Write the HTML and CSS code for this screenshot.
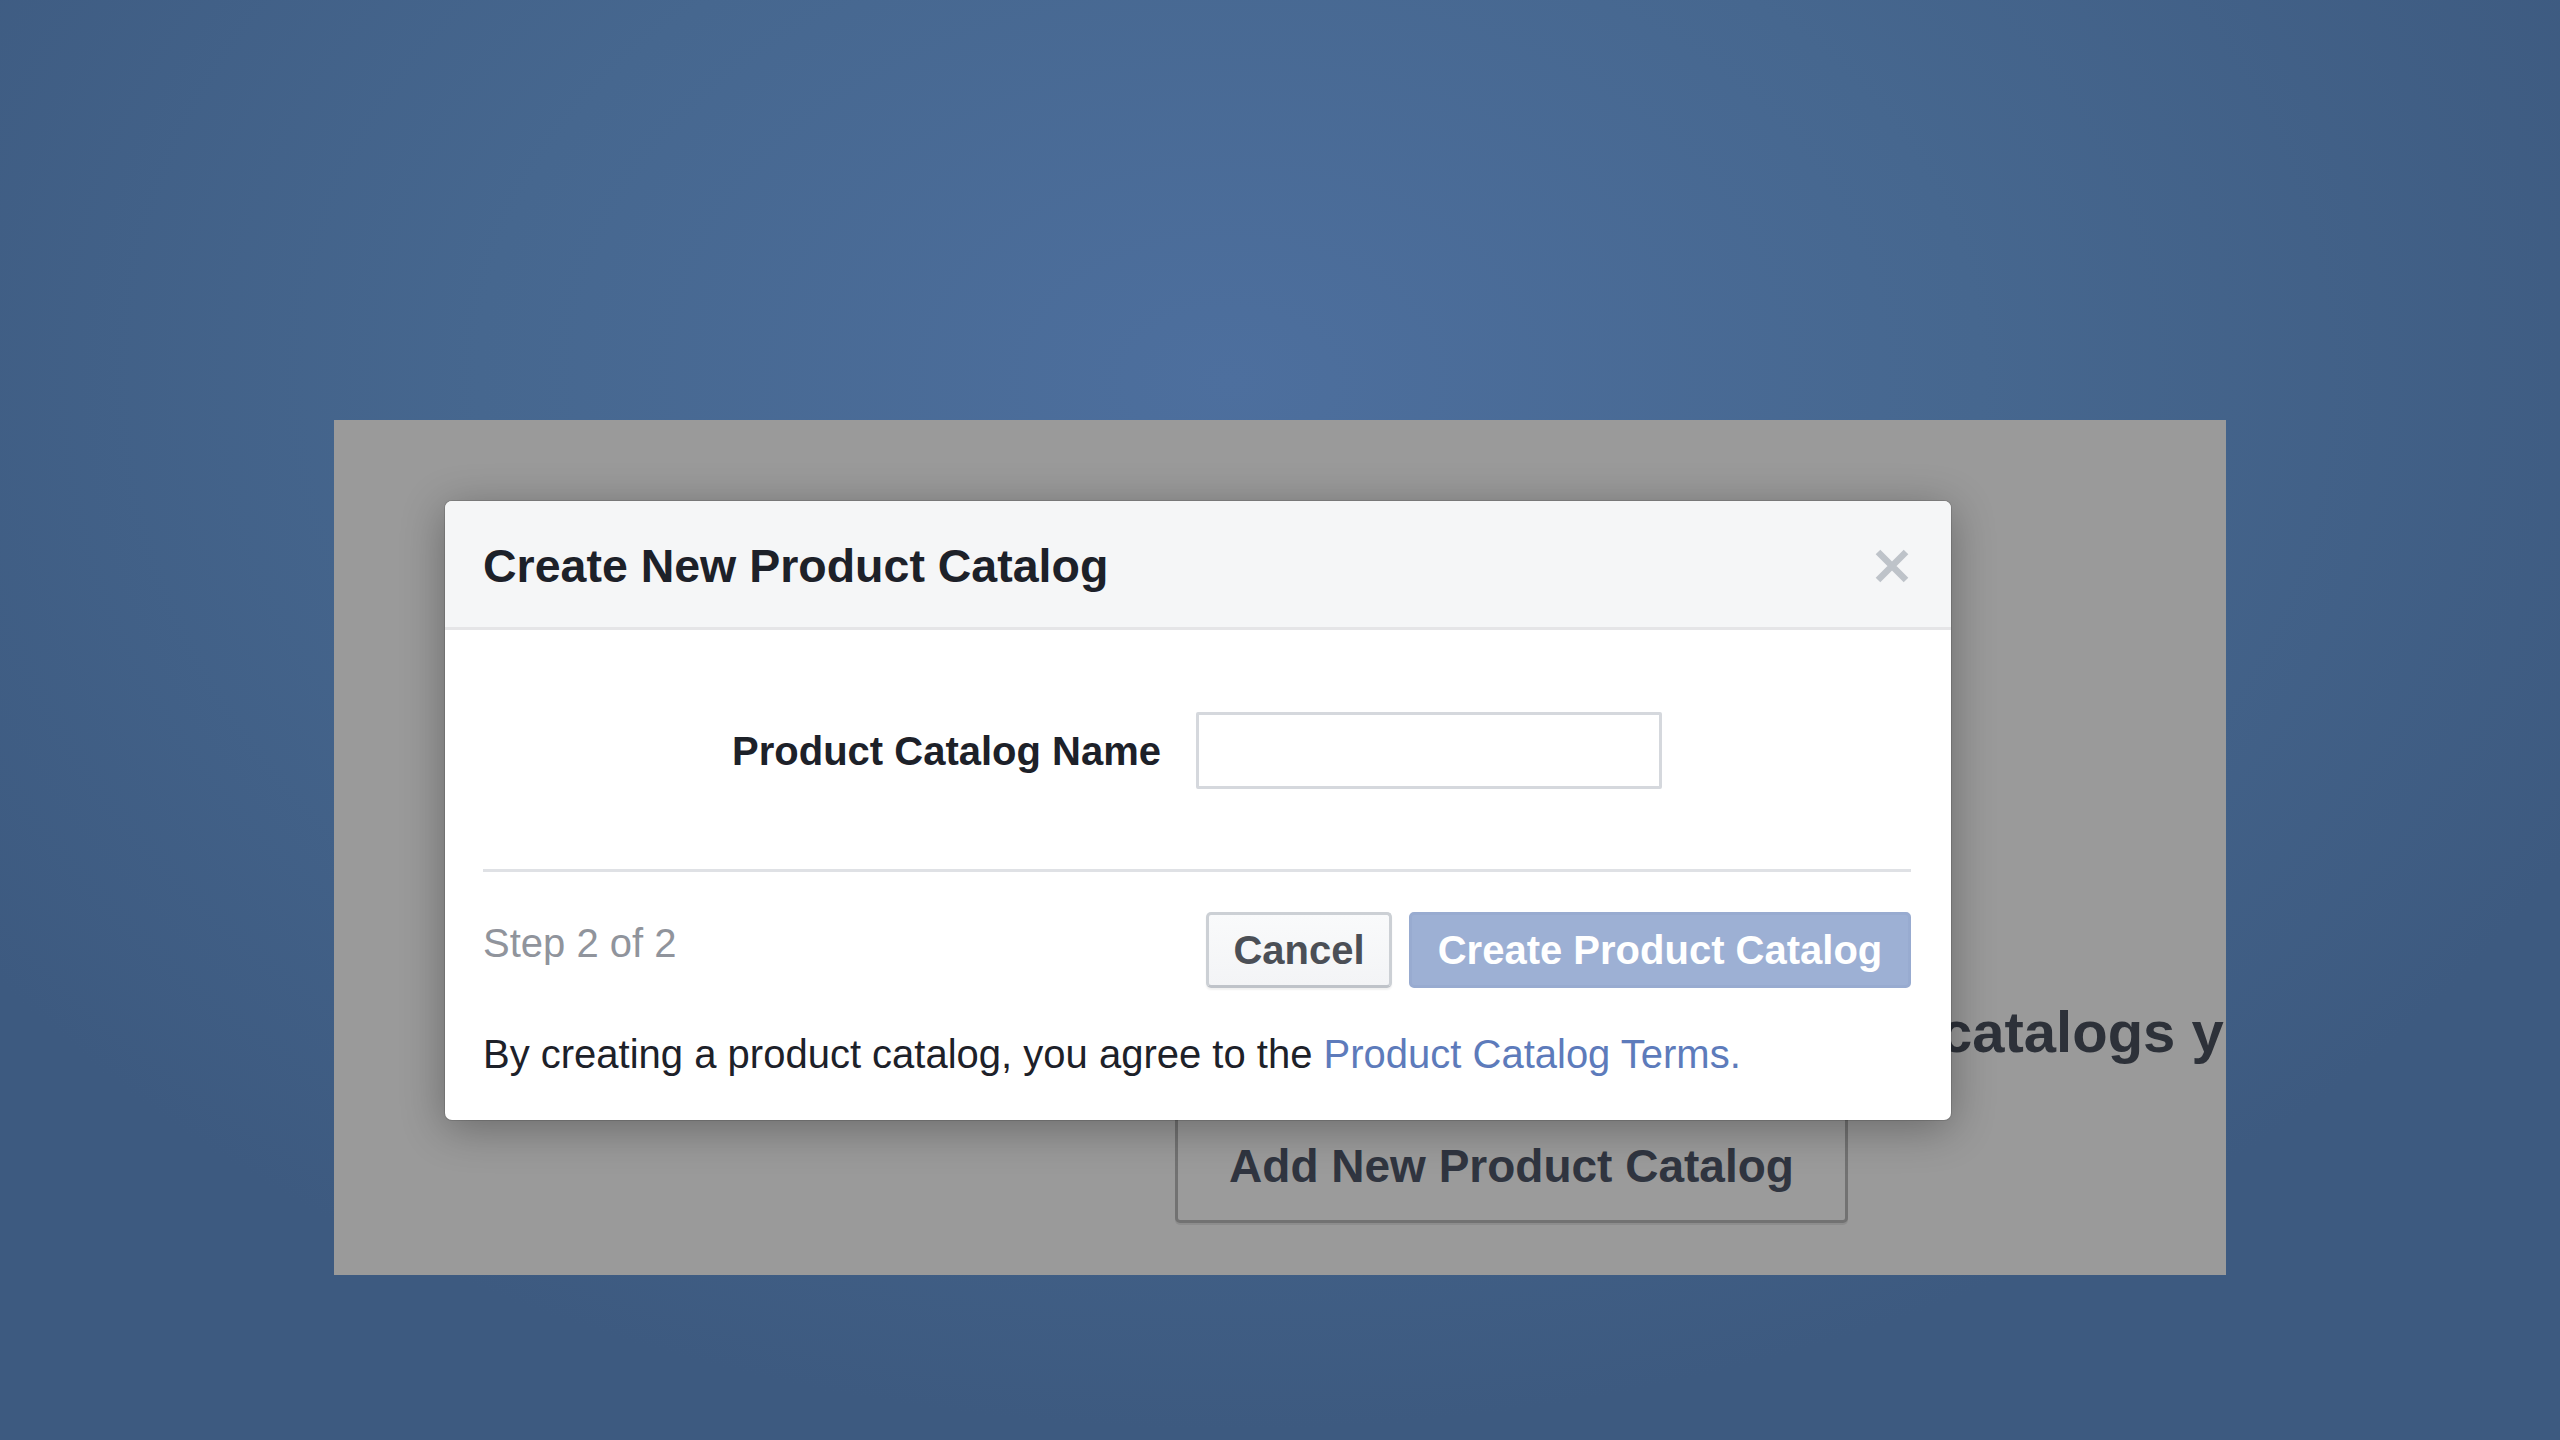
FILE: index.html
```html
<!DOCTYPE html>
<html lang="en">
<head>
<meta charset="utf-8">
<title>Create New Product Catalog</title>
<link rel="stylesheet" href="styles.css">
</head>
<body>
<div class="stage">
  <div class="page">
    <h2 class="page-heading">catalogs you</h2>
    <button class="page-btn" type="button">Add New Product Catalog</button>

    <div class="modal" role="dialog">
      <div class="modal-header">
        <h1 class="modal-title">Create New Product Catalog</h1>
        <button class="close" type="button" aria-label="Close">
          <svg width="36" height="34" viewBox="0 0 36 34"><path d="M4 3 L32 31 M32 3 L4 31" stroke="#bec3c9" stroke-width="6.5" stroke-linecap="butt" fill="none"/></svg>
        </button>
      </div>
      <div class="modal-body">
        <div class="field-row">
          <label class="field-label" for="catalog-name">Product Catalog Name</label>
          <input class="field-input" id="catalog-name" type="text">
        </div>
        <div class="divider"></div>
        <div class="footer-row">
          <span class="step">Step 2 of 2</span>
          <div class="actions">
            <button class="btn btn-cancel" type="button">Cancel</button>
            <button class="btn btn-primary" type="button">Create Product Catalog</button>
          </div>
        </div>
        <p class="terms">By creating a product catalog, you agree to the <a class="terms-link" href="#">Product Catalog Terms.</a></p>
      </div>
    </div>
  </div>
</div>
</body>
</html>
```
FILE: styles.css
```css
* { box-sizing: border-box; }

html, body {
  margin: 0;
  padding: 0;
}

body {
  width: 2560px;
  height: 1440px;
  overflow: hidden;
  font-family: "Liberation Sans", Arial, Helvetica, sans-serif;
  background: radial-gradient(ellipse 1500px 1050px at 1230px 380px, #4d6f9e 0%, #46678f 50%, #3d5a80 100%);
}

.stage {
  padding: 420px 0 0 334px;
}

.page {
  position: relative;
  width: 1892px;
  height: 855px;
  background: #9a9a9a;
  overflow: hidden;
}

.page-heading {
  margin: 0;
  padding: 577px 0 0 1606px;
  font-size: 58px;
  line-height: 70px;
  font-weight: bold;
  color: #2d3139;
  white-space: nowrap;
}

.page-btn {
  display: block;
  margin: 42px 0 0 841px;
  width: 673px;
  height: 114px;
  font: bold 46px "Liberation Sans", Arial, sans-serif;
  color: #303540;
  background: #9b9b9b;
  border: 3px solid #727272;
  border-radius: 5px;
  box-shadow: 0 2px 0 rgba(0,0,0,0.08);
  padding: 0;
}

.modal {
  position: absolute;
  left: 111px;
  top: 81px;
  width: 1506px;
  height: 619px;
  background: #ffffff;
  border-radius: 7px;
  box-shadow: 0 0 0 1px rgba(0,0,0,0.12), 0 8px 44px rgba(0,0,0,0.32);
  overflow: hidden;
}

.modal-header {
  height: 129px;
  display: flex;
  align-items: center;
  justify-content: space-between;
  padding: 3px 41px 0 38px;
  background: #f5f6f7;
  border-bottom: 3px solid #e5e5e7;
}

.modal-title {
  margin: 0;
  font-size: 46.5px;
  font-weight: bold;
  color: #1d2129;
}

.close {
  width: 36px;
  height: 34px;
  padding: 0;
  border: 0;
  background: transparent;
  display: flex;
}

.modal-body {
  padding: 82px 40px 0 38px;
}

.field-row {
  display: grid;
  grid-template-columns: 678px 466px;
  column-gap: 35px;
  align-items: center;
}

.field-label {
  text-align: right;
  font-size: 40px;
  font-weight: bold;
  color: #1d2129;
  padding-top: 2px;
}

.field-input {
  height: 77px;
  border: 3px solid #d5d8dd;
  border-radius: 2px;
  background: #fff;
  font: 40px "Liberation Sans", Arial, sans-serif;
}

.divider {
  margin-top: 80px;
  height: 3px;
  background: #dfe1e5;
}

.footer-row {
  margin-top: 40px;
  display: flex;
  justify-content: space-between;
  align-items: flex-start;
}

.step {
  font-size: 40px;
  line-height: 62px;
  color: #90949c;
}

.actions {
  display: flex;
  gap: 17px;
}

.btn {
  height: 76px;
  border-radius: 5px;
  font: bold 40px "Liberation Sans", Arial, sans-serif;
  padding: 0;
  text-align: center;
}

.btn-cancel {
  width: 186px;
  color: #4b4f56;
  background: linear-gradient(#f9fafb, #f3f4f6);
  border: 3px solid #ccd0d5;
  border-bottom-color: #bfc3c9;
  box-shadow: 0 2px 2px rgba(0,0,0,0.06);
}

.btn-primary {
  width: 502px;
  color: #ffffff;
  background: #9db0d4;
  border: 3px solid #98abd0;
}

.terms {
  margin: 43px 0 0;
  font-size: 40px;
  line-height: 46px;
  color: #1d2129;
}

.terms-link {
  color: #5d7bbb;
  text-decoration: none;
}
```
